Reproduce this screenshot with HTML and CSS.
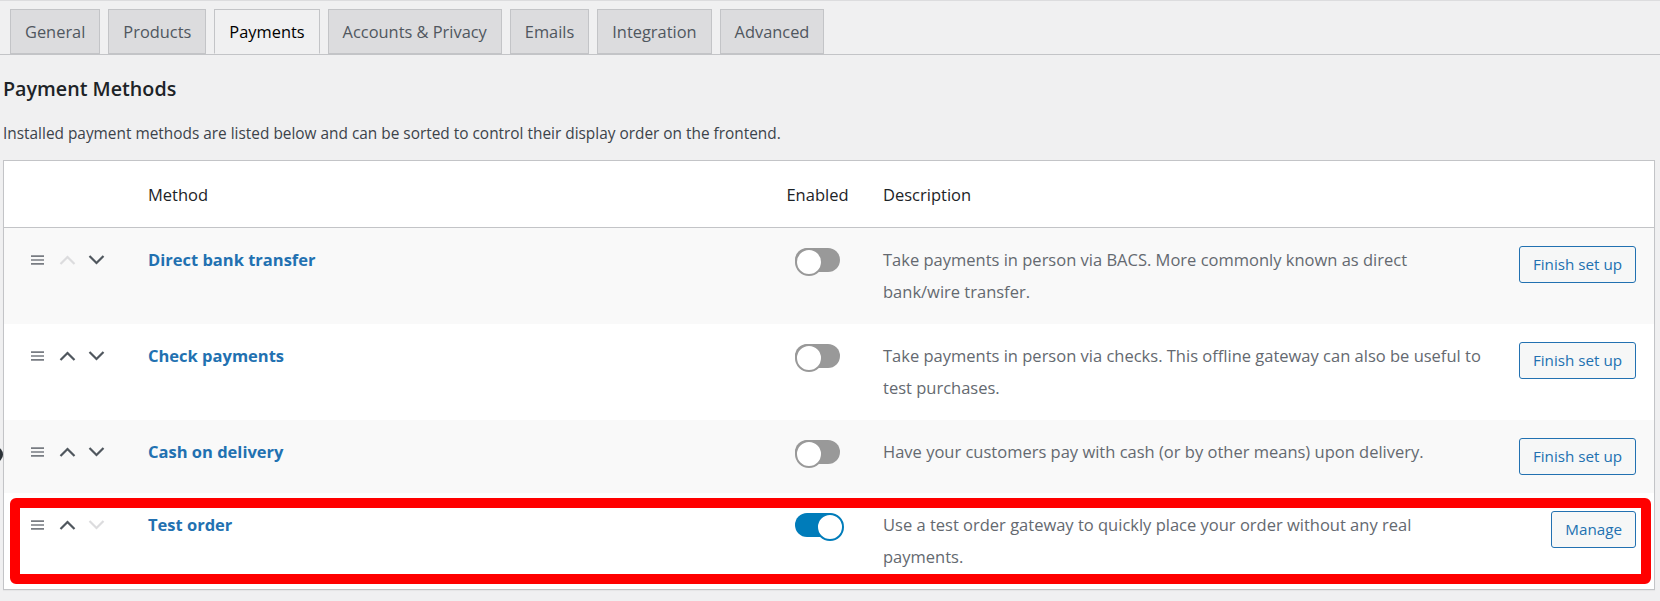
FILE: index.html
```html
<!DOCTYPE html>
<html lang="en">
<head>
	<meta charset="UTF-8">
	<title>Payments settings</title>
	<link rel="stylesheet" href="styles.css">
</head>
<body>
	<div class="page">
		<nav class="tabs">
			<a class="tab">General</a>
			<a class="tab">Products</a>
			<a class="tab active">Payments</a>
			<a class="tab">Accounts &amp; Privacy</a>
			<a class="tab">Emails</a>
			<a class="tab">Integration</a>
			<a class="tab">Advanced</a>
		</nav>

		<h2 class="title">Payment Methods</h2>
		<p class="intro">Installed payment methods are listed below and can be sorted to control their display order on the frontend.</p>

		<div class="methods">
			<table class="gateways">
				<colgroup>
					<col class="c-sort">
					<col class="c-name">
					<col class="c-status">
					<col class="c-desc">
					<col class="c-action">
				</colgroup>
				<thead>
					<tr>
						<th></th>
						<th>Method</th>
						<th class="status">Enabled</th>
						<th>Description</th>
						<th></th>
					</tr>
				</thead>
				<tbody>
					<tr class="alt">
						<td>
							<div class="sort">
								<span class="handle"><svg width="13" height="10" viewBox="0 0 13 10"><path d="M0 1.2h13M0 5h13M0 8.8h13"/></svg></span>
								<span class="move off"><svg width="17" height="10" viewBox="0 0 17 10"><path d="M1.5 9L8.5 2L15.5 9"/></svg></span>
								<span class="move"><svg width="17" height="10" viewBox="0 0 17 10"><path d="M1.5 1L8.5 8L15.5 1"/></svg></span>
							</div>
						</td>
						<td><a class="name">Direct bank transfer</a></td>
						<td class="status"><span class="toggle"></span></td>
						<td class="desc">Take payments in person via BACS. More commonly known as direct bank/wire transfer.</td>
						<td class="action"><a class="btn">Finish set up</a></td>
					</tr>
					<tr>
						<td>
							<div class="sort">
								<span class="handle"><svg width="13" height="10" viewBox="0 0 13 10"><path d="M0 1.2h13M0 5h13M0 8.8h13"/></svg></span>
								<span class="move"><svg width="17" height="10" viewBox="0 0 17 10"><path d="M1.5 9L8.5 2L15.5 9"/></svg></span>
								<span class="move"><svg width="17" height="10" viewBox="0 0 17 10"><path d="M1.5 1L8.5 8L15.5 1"/></svg></span>
							</div>
						</td>
						<td><a class="name">Check payments</a></td>
						<td class="status"><span class="toggle"></span></td>
						<td class="desc">Take payments in person via checks. This offline gateway can also be useful to test purchases.</td>
						<td class="action"><a class="btn">Finish set up</a></td>
					</tr>
					<tr class="alt">
						<td>
							<div class="sort">
								<span class="handle"><svg width="13" height="10" viewBox="0 0 13 10"><path d="M0 1.2h13M0 5h13M0 8.8h13"/></svg></span>
								<span class="move"><svg width="17" height="10" viewBox="0 0 17 10"><path d="M1.5 9L8.5 2L15.5 9"/></svg></span>
								<span class="move"><svg width="17" height="10" viewBox="0 0 17 10"><path d="M1.5 1L8.5 8L15.5 1"/></svg></span>
							</div>
						</td>
						<td><a class="name">Cash on delivery</a></td>
						<td class="status"><span class="toggle"></span></td>
						<td class="desc">Have your customers pay with cash (or by other means) upon delivery.</td>
						<td class="action"><a class="btn">Finish set up</a></td>
					</tr>
					<tr>
						<td>
							<div class="sort">
								<span class="handle"><svg width="13" height="10" viewBox="0 0 13 10"><path d="M0 1.2h13M0 5h13M0 8.8h13"/></svg></span>
								<span class="move"><svg width="17" height="10" viewBox="0 0 17 10"><path d="M1.5 9L8.5 2L15.5 9"/></svg></span>
								<span class="move off"><svg width="17" height="10" viewBox="0 0 17 10"><path d="M1.5 1L8.5 8L15.5 1"/></svg></span>
							</div>
						</td>
						<td><a class="name">Test order</a></td>
						<td class="status"><span class="toggle on"></span></td>
						<td class="desc">Use a test order gateway to quickly place your order without any real payments.</td>
						<td class="action"><a class="btn">Manage</a></td>
					</tr>
				</tbody>
			</table>
			<div class="highlight"></div>
		</div>

		<span class="edge-dot"></span>
	</div>
</body>
</html>
```

FILE: styles.css
```css
* {
	margin: 0;
	padding: 0;
	box-sizing: border-box;
}

body {
	background: #f0f0f1;
	font-family: "Open Sans", "Noto Sans", sans-serif;
	color: #3c434a;
}

.page {
	position: relative;
	height: 601px;
	border-top: 1px solid #dcdcde;
	overflow: hidden;
}

/* tabs */
.tabs {
	display: flex;
	gap: 8px;
	padding: 8px 0 0 10px;
	border-bottom: 1px solid #c3c4c7;
	height: 54px;
}

.tab {
	display: block;
	height: 45px;
	margin-bottom: -1px;
	padding: 0 14px;
	line-height: 44px;
	font-size: 16.4px;
	color: #50575e;
	background: #dcdcde;
	border: 1px solid #c3c4c7;
}

.tab.active {
	background: #f0f0f1;
	color: #000;
	border-bottom-color: #f0f0f1;
}

.title {
	margin: 19px 0 0 3px;
	font-size: 19.7px;
	line-height: 30px;
	font-weight: 600;
	color: #1d2327;
}

.intro {
	margin: 18px 0 0 3px;
	font-size: 15.4px;
	line-height: 24px;
}

/* table */
.methods {
	position: relative;
	margin: 14px 5px 0 3px;
	background: #fff;
	border: 1px solid #c3c4c7;
	box-shadow: 0 1px 1px rgba(0, 0, 0, .04);
}

.gateways {
	width: 100%;
	border-collapse: collapse;
	table-layout: fixed;
	font-size: 16.5px;
}

.c-sort { width: 128px; }
.c-name { width: 636px; }
.c-status { width: 99px; }
.c-desc { width: 633px; }
.c-action { width: 154px; }

.gateways th {
	padding: 18px 16px 16px;
	line-height: 32px;
	text-align: left;
	font-weight: 500;
	color: #1d2327;
	border-bottom: 1px solid #c3c4c7;
}

.gateways td {
	padding: 16px;
	line-height: 32px;
	vertical-align: top;
}

.gateways tr.alt td {
	background: #f9f9f9;
}

.gateways .status {
	text-align: center;
}

.sort {
	display: flex;
	align-items: center;
	height: 32px;
	margin-left: 11px;
}

.sort span {
	display: flex;
}

.handle {
	margin-right: 15px;
}

.handle svg path {
	fill: none;
	stroke: #787c82;
	stroke-width: 1.7;
}

.move + .move {
	margin-left: 12px;
}

.move svg path {
	fill: none;
	stroke: #50575e;
	stroke-width: 2.2;
}

.move.off svg path {
	stroke: #dcdcde;
}

.name {
	color: #2271b1;
	font-weight: 700;
}

.toggle {
	display: inline-block;
	position: relative;
	width: 45px;
	height: 24px;
	margin-top: 4px;
	vertical-align: top;
	border-radius: 12px;
	background: #999;
}

.toggle::after {
	content: "";
	position: absolute;
	left: 0;
	top: 0;
	width: 24px;
	height: 24px;
	border-radius: 50%;
	background: #fff;
	border: 2px solid #999;
}

.toggle.on {
	background: #007cba;
}

.toggle.on::after {
	left: 21px;
	border-color: #007cba;
}

.desc {
	color: #646970;
}

td.action {
	text-align: right;
	padding-right: 18px;
}

.btn {
	display: inline-block;
	height: 37px;
	margin: 2px 0;
	padding: 0 13px;
	line-height: 35px;
	font-size: 15.2px;
	color: #2271b1;
	background: #f6f7f7;
	border: 1px solid #2271b1;
	border-radius: 3px;
	vertical-align: top;
}

/* annotation over the last row */
.highlight {
	position: absolute;
	left: 6px;
	top: 337px;
	width: 1641px;
	height: 86px;
	border: 10px solid #ff0000;
	border-radius: 6px;
}

.edge-dot {
	position: absolute;
	left: -11px;
	top: 446px;
	width: 14px;
	height: 15px;
	border-radius: 50%;
	background: #2c3338;
}
```
